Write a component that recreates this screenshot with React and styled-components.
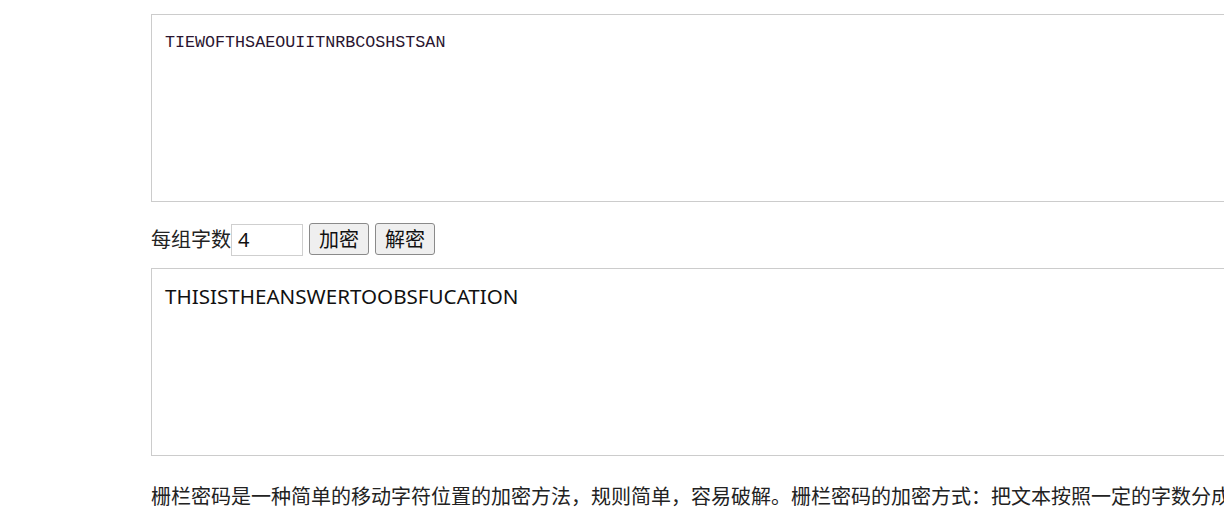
import React from "react";
import styled, { createGlobalStyle } from "styled-components";

const GlobalStyle = createGlobalStyle`
  html, body {
    margin: 0;
    padding: 0;
    background: #ffffff;
    overflow: hidden;
  }
  body {
    font-family: "Noto Sans CJK SC", "Noto Sans", sans-serif;
    color: #222;
  }
`;

const Page = styled.div`
  width: 1300px;
  padding: 14px 0 0 151px;
  box-sizing: border-box;
`;

const TextBox = styled.textarea`
  display: block;
  width: 1120px;
  height: ${(p) => p.$height}px;
  box-sizing: border-box;
  border: 1px solid #cccccc;
  border-radius: 0;
  padding: 13px;
  margin: 0;
  resize: none;
  outline: none;
  color: ${(p) => (p.$mono ? "#2a1530" : "#111")};
  font-family: ${(p) =>
    p.$mono
      ? `"Liberation Mono", "Noto Sans CJK SC", monospace`
      : `"Noto Sans", "Noto Sans CJK SC", sans-serif`};
  font-size: ${(p) => (p.$mono ? "16.7px" : "20.6px")};
  line-height: ${(p) => (p.$mono ? "30px" : "28px")};
  background: #fff;
`;

const Controls = styled.div`
  display: flex;
  align-items: center;
  height: 34px;
  margin: 20px 0 12px;
  font-size: 20px;
`;

const Label = styled.span`
  color: #222;
  line-height: 1;
`;

const NumInput = styled.input`
  width: 72px;
  height: 32px;
  box-sizing: border-box;
  border: 1px solid #cfcfcf;
  padding: 0 6px;
  margin: 1px 6px 0 0;
  font-family: "Noto Sans", sans-serif;
  font-size: 20px;
  color: #111;
  outline: none;
`;

const Button = styled.button`
  width: 60px;
  height: 32px;
  box-sizing: border-box;
  margin: 0 6px 0 0;
  padding: 0;
  background: #efefef;
  border: 1px solid #8a8a8a;
  border-radius: 3px;
  font-family: "Noto Sans CJK SC", sans-serif;
  font-size: 20px;
  color: #111;
  line-height: 1;
`;

const Desc = styled.p`
  margin: 26px 0 0;
  font-size: 20px;
  line-height: 28px;
  color: #222;
  white-space: nowrap;
`;

export default function App() {
  return (
    <>
      <GlobalStyle />
      <Page>
        <TextBox
          $height={188}
          $mono
          readOnly
          defaultValue="TIEWOFTHSAEOUIITNRBCOSHSTSAN"
        />
        <Controls>
          <Label>每组字数</Label>
          <NumInput defaultValue="4" />
          <Button>加密</Button>
          <Button>解密</Button>
        </Controls>
        <TextBox
          $height={188}
          readOnly
          defaultValue="THISISTHEANSWERTOOBSFUCATION"
        />
        <Desc>
          栅栏密码是一种简单的移动字符位置的加密方法，规则简单，容易破解。栅栏密码的加密方式：把文本按照一定的字数分成
        </Desc>
      </Page>
    </>
  );
}
